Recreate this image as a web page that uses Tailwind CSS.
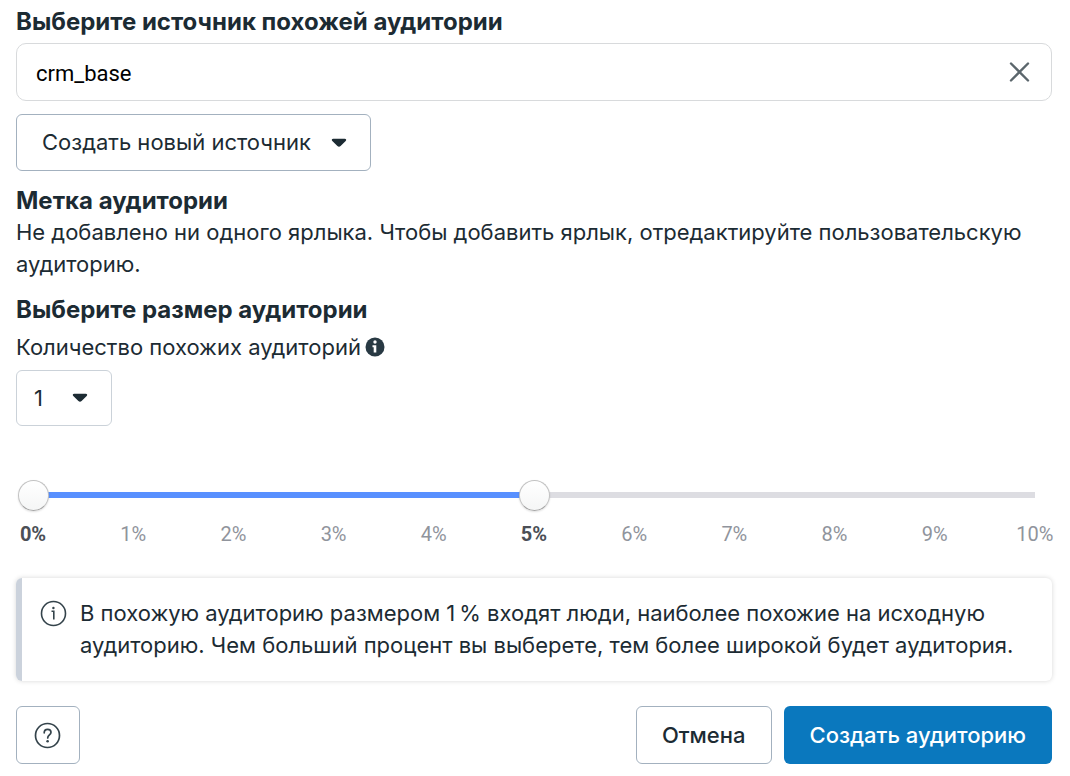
<!DOCTYPE html>
<html lang="ru">
<head>
<meta charset="utf-8">
<meta name="viewport" content="width=device-width, initial-scale=1">
<title>Создание похожей аудитории</title>
<script src="https://cdn.jsdelivr.net/npm/@tailwindcss/browser@4"></script>
</head>
<body class="bg-white font-['Inter','Roboto',sans-serif] text-[22px] leading-8 text-[#1c2b33]">
<form class="flex flex-col pl-4 pr-[18px] pt-1.5">
  <label for="source" class="text-2xl leading-8 font-bold">Выберите источник похожей аудитории</label>
  <div class="mt-[5px] flex h-[58px] items-center rounded-[10px] border border-[#d8dadc] pl-[19px] pr-5">
    <input id="source" type="text" value="crm_base" class="h-full min-w-0 flex-1 bg-transparent pt-0.5 font-['Roboto',sans-serif] text-[22px] text-black outline-none">
    <button type="button" aria-label="Очистить" class="shrink-0">
      <svg class="size-6" viewBox="0 0 24 24" fill="none" stroke="#5b666c" stroke-width="2.4" stroke-linecap="round"><path d="M4 3.500l17 17M21 3.500L4 20.500"/></svg>
    </button>
  </div>
  <button type="button" class="mt-[13px] flex h-[57px] items-center gap-5 self-start rounded-md border border-[#a3b1bf] pb-0.5 pl-[25px] pr-[23px]">
    <span>Создать новый источник</span>
    <svg class="mt-0.5 h-2.5 w-4" viewBox="0 0 16 10" fill="#1c2b33"><path d="M2.200.8h11.600c1.400 0 1.900 1.400.9 2.300L9.600 7.900a2.300 2.300 0 0 1-3.200 0L1.300 3.100C.3 2.200.8.8 2.200.8z"/></svg>
  </button>

  <h2 class="mt-3.5 text-2xl leading-[31px] font-bold">Метка аудитории</h2>
  <p>Не добавлено ни одного ярлыка. Чтобы добавить ярлык, отредактируйте пользовательскую аудиторию.</p>

  <h2 class="mt-3.5 text-2xl leading-8 font-bold">Выберите размер аудитории</h2>
  <div class="mt-[5px] flex items-center gap-1">
    <label for="count">Количество похожих аудиторий</label>
    <svg class="size-5" viewBox="0 0 20 20" aria-hidden="true"><circle cx="10" cy="10" r="9.500" fill="#283943"/><circle cx="10" cy="5" r="1.700" fill="#fff"/><path d="M7.500 8.200h3.800v7.300H8.700v-5.200H7.500z" fill="#fff"/></svg>
  </div>
  <div class="relative mt-[7px] self-start">
    <select id="count" class="h-14 w-24 appearance-none rounded-md border border-[#cbd2d9] bg-white pl-[17px]">
      <option>1</option><option>2</option><option>3</option>
    </select>
    <svg class="pointer-events-none absolute top-[23px] right-6 h-2.5 w-4" viewBox="0 0 16 10" fill="#1c2b33"><path d="M2.200.8h11.600c1.400 0 1.900 1.400.9 2.300L9.600 7.900a2.300 2.300 0 0 1-3.200 0L1.300 3.100C.3 2.200.8.8 2.200.8z"/></svg>
  </div>

  <div class="mt-[53px] mr-0.5 ml-0.5 grid items-center">
    <div class="col-start-1 row-start-1 mx-[15px] h-1.5 bg-[#dddde2]"><div class="h-full bg-[#5890ff]" style="width:50%"></div></div>
    <input type="range" min="0" max="10" value="0" aria-label="От" class="pointer-events-none col-start-1 row-start-1 h-8 w-full appearance-none bg-transparent [&::-webkit-slider-thumb]:pointer-events-auto [&::-webkit-slider-thumb]:size-[31px] [&::-webkit-slider-thumb]:appearance-none [&::-webkit-slider-thumb]:rounded-full [&::-webkit-slider-thumb]:border [&::-webkit-slider-thumb]:border-[#c2c2c2] [&::-webkit-slider-thumb]:border-b-[#a5a5a5] [&::-webkit-slider-thumb]:bg-linear-to-b [&::-webkit-slider-thumb]:from-white [&::-webkit-slider-thumb]:to-[#f5f6f6] [&::-webkit-slider-thumb]:shadow-[0_1px_2px_rgba(0,0,0,0.12)]">
    <input type="range" min="0" max="10" value="5" aria-label="До" class="pointer-events-none col-start-1 row-start-1 h-8 w-full appearance-none bg-transparent [&::-webkit-slider-thumb]:pointer-events-auto [&::-webkit-slider-thumb]:size-[31px] [&::-webkit-slider-thumb]:appearance-none [&::-webkit-slider-thumb]:rounded-full [&::-webkit-slider-thumb]:border [&::-webkit-slider-thumb]:border-[#c2c2c2] [&::-webkit-slider-thumb]:border-b-[#a5a5a5] [&::-webkit-slider-thumb]:bg-linear-to-b [&::-webkit-slider-thumb]:from-white [&::-webkit-slider-thumb]:to-[#f5f6f6] [&::-webkit-slider-thumb]:shadow-[0_1px_2px_rgba(0,0,0,0.12)]">
  </div>
  <div class="mt-[11px] mr-[17px] ml-[17px] flex justify-between font-['Roboto',sans-serif] text-xl leading-6 text-[#90949c] *:flex *:w-0 *:justify-center">
    <span class="font-bold text-[#4b4f56]">0%</span><span>1%</span><span>2%</span><span>3%</span><span>4%</span><span class="font-bold text-[#4b4f56]">5%</span><span>6%</span><span>7%</span><span>8%</span><span>9%</span><span>10%</span>
  </div>

  <div class="mt-8 flex gap-[13px] rounded-md border-l-6 border-[#cbd2dc] pt-[19px] pr-4 pb-5 pl-[18px] shadow-[0_0_5px_rgba(0,0,0,0.16)]">
    <svg class="mt-[3px] size-[27px] shrink-0" viewBox="0 0 27 27" fill="none" stroke="#34434b" stroke-width="1.600"><circle cx="13.500" cy="13.500" r="12"/><path d="M11.500 11.300h2.300v8.200"/><circle cx="13.400" cy="8" r="1.200" fill="#34434b" stroke="none"/></svg>
    <p>В похожую аудиторию размером 1&#8239;% входят люди, наиболее похожие на исходную аудиторию. Чем больший процент вы выберете, тем более широкой будет аудитория.</p>
  </div>

  <div class="mt-[25px] flex gap-3">
    <button type="button" aria-label="Справка" class="mr-auto flex h-[58px] w-16 items-center rounded-md border border-[#a3b1bf] pl-[17px]">
      <svg class="size-[27px]" viewBox="0 0 27 27" fill="none" stroke="#34434b" stroke-width="1.700"><circle cx="13.500" cy="13.500" r="12"/><path d="M10.200 10.800c0-2.200 1.400-3.500 3.400-3.500s3.400 1.200 3.400 3c0 2.600-3.300 2.700-3.300 5.700" stroke-linecap="round"/><circle cx="13.600" cy="19.300" r="1.300" fill="#34434b" stroke="none"/></svg>
    </button>
    <button type="button" class="h-[58px] rounded-md border border-[#a3b1bf] px-[25px] font-medium">Отмена</button>
    <button type="submit" class="h-[58px] rounded-md bg-[#0a78be] px-[26px] font-medium text-white">Создать аудиторию</button>
  </div>
</form>
</body>
</html>
